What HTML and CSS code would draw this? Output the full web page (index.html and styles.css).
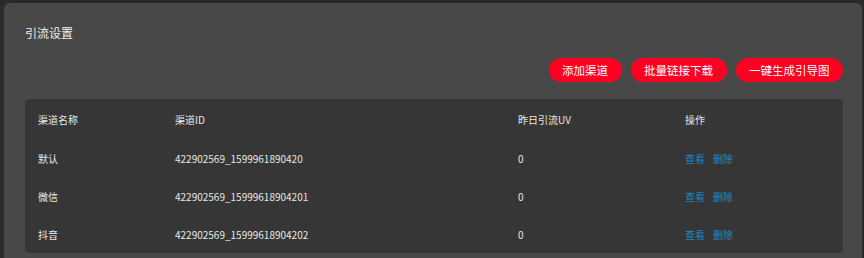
FILE: index.html
```html
<!DOCTYPE html>
<html lang="zh">
<head>
<meta charset="utf-8">
<link rel="stylesheet" href="styles.css">
</head>
<body>
<div class="panel">
  <div class="title">引流设置</div>
  <div class="actions">
    <button class="btn">添加渠道</button>
    <button class="btn">批量链接下载</button>
    <button class="btn">一键生成引导图</button>
  </div>
  <div class="table">
    <div class="row head">
      <div>渠道名称</div><div>渠道ID</div><div>昨日引流UV</div><div>操作</div>
    </div>
    <div class="row">
      <div>默认</div><div>422902569_1599961890420</div><div>0</div>
      <div><a class="link">查看</a><a class="link">删除</a></div>
    </div>
    <div class="row">
      <div>微信</div><div>422902569_15999618904201</div><div>0</div>
      <div><a class="link">查看</a><a class="link">删除</a></div>
    </div>
    <div class="row">
      <div>抖音</div><div>422902569_15999618904202</div><div>0</div>
      <div><a class="link">查看</a><a class="link">删除</a></div>
    </div>
  </div>
</div>
</body>
</html>
```
FILE: styles.css
```css
html, body {
  margin: 0;
  padding: 0;
  background: #2a2a2a;
  font-family: "Noto Sans CJK SC", "Liberation Sans", sans-serif;
  color: #e8e8e8;
}
.panel {
  box-sizing: border-box;
  margin: 3px 2px 0 4px;
  height: 255px;
  background: #484848;
  border-radius: 6px 6px 0 0;
  padding: 20px 19px 0 21px;
}
.title {
  font-size: 12px;
  line-height: 20px;
  color: #eeeeee;
}
.actions {
  display: flex;
  justify-content: flex-end;
  gap: 9px;
  margin-top: 15px;
}
.btn {
  font-family: inherit;
  font-size: 11.5px;
  height: 24px;
  padding: 0 13.5px;
  border: none;
  border-radius: 12px;
  background: #ff0022;
  color: #ffffff;
  line-height: 24px;
}
.table {
  margin-top: 17px;
  background: #363636;
  border-radius: 4px;
  padding-left: 13px;
  font-size: 10px;
}
.row {
  display: grid;
  grid-template-columns: 137px 343px 167px 1fr;
  height: 38px;
  align-items: center;
}
.row.head {
  height: 40px;
}
.link {
  color: #1b87d0;
  margin-right: 8px;
}
```
